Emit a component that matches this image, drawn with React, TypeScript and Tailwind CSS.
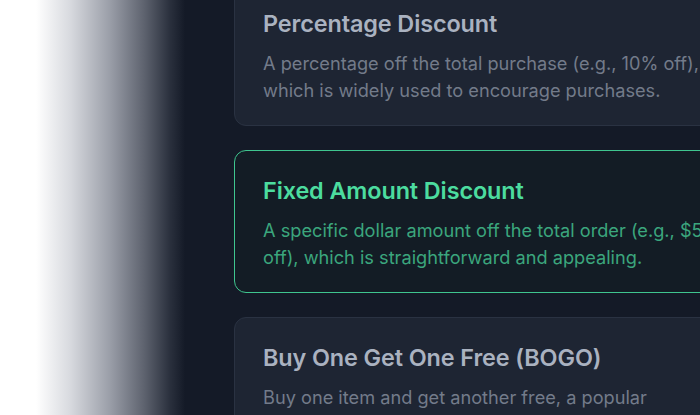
const options = [
  {
    title: 'Percentage Discount',
    body: 'A percentage off the total purchase (e.g., 10% off), which is widely used to encourage purchases.',
    active: false,
  },
  {
    title: 'Fixed Amount Discount',
    body: 'A specific dollar amount off the total order (e.g., $5 off), which is straightforward and appealing.',
    active: true,
  },
  {
    title: 'Buy One Get One Free (BOGO)',
    body: 'Buy one item and get another free, a popular promotion that moves more stock quickly.',
    active: false,
  },
];

function OptionCard({ title, body, active }: { title: string; body: string; active: boolean }) {
  return (
    <div
      className={
        active
          ? 'w-[522px] shrink-0 rounded-xl border-[1.5px] border-[#3fc58f] bg-[#131c25] px-7 pt-6 pb-[21px]'
          : 'w-[522px] shrink-0 rounded-xl border border-[#2a3242] bg-[#1e2533] px-7 pt-6 pb-[21px]'
      }
    >
      <h3
        className={
          active
            ? 'text-[23.4px] font-semibold leading-8 tracking-[-0.1px] text-[#4cdc9f]'
            : 'text-[23.4px] font-semibold leading-8 tracking-[-0.1px] text-[#aab2c0]'
        }
      >
        {title}
      </h3>
      <p
        className={
          active
            ? 'mt-2.5 text-[18.2px] leading-[27px] text-[#3ba67d]'
            : 'mt-2.5 text-[18.2px] leading-[27px] text-[#737b8a]'
        }
      >
        {body}
      </p>
    </div>
  );
}

export default function App() {
  return (
    <div className="h-[415px] w-[700px] overflow-hidden bg-[linear-gradient(to_right,#ffffff_36px,#d8dadf_70px,#9a9ea8_110px,#5c616d_145px,#2a303d_170px,#141a27_185px)] font-['Inter',sans-serif]">
      <div className="-mt-[17px] flex flex-col gap-6 pl-[234px]">
        {options.map((o) => (
          <OptionCard key={o.title} {...o} />
        ))}
      </div>
    </div>
  );
}
